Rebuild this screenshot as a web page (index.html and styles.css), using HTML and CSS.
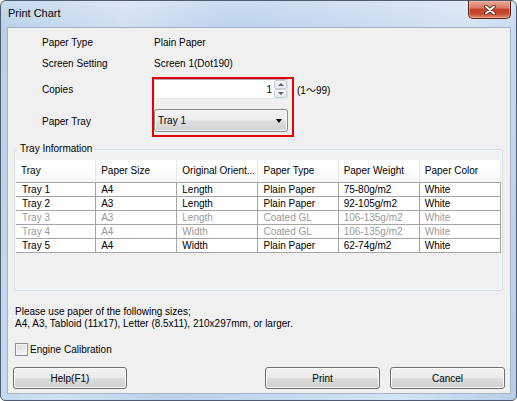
FILE: index.html
```html
<!DOCTYPE html>
<html>
<head>
<meta charset="utf-8">
<link rel="stylesheet" href="styles.css">
</head>
<body>
<div class="window">
  <div class="titlebar">
    <span class="title">Print Chart</span>
    <div class="close">
      <svg width="12" height="10" viewBox="0 0 12 10">
        <path d="M2 1.5 L10 8.5 M10 1.5 L2 8.5" stroke="#4a1d16" stroke-width="3.6" stroke-linecap="round" fill="none"/>
        <path d="M2 1.5 L10 8.5 M10 1.5 L2 8.5" stroke="#ffffff" stroke-width="2" stroke-linecap="round" fill="none"/>
      </svg>
    </div>
  </div>
  <div class="client">
    <div class="form">
      <div class="lbl">Paper Type</div><div class="val">Plain Paper</div><div></div>
      <div class="lbl">Screen Setting</div><div class="val">Screen 1(Dot190)</div><div></div>
      <div class="lbl r3">Copies</div>
      <div class="lbl r4">Paper Tray</div>
      <div class="highlight">
        <div class="spin">
          <span class="spin-val">1</span>
          <div class="spin-btns">
            <div class="spin-btn"><span class="tri-up"></span></div>
            <div class="spin-btn"><span class="tri-down"></span></div>
          </div>
        </div>
        <div class="select"><span>Tray 1</span><span class="arrow"></span></div>
      </div>
      <div class="range">(1〜99)</div>
    </div>

    <fieldset class="group">
      <legend>Tray Information</legend>
      <div class="listview">
        <table>
          <colgroup><col class="c80"><col class="c81"><col class="c81"><col class="c80"><col class="c81"><col class="c81"></colgroup>
          <thead>
            <tr><th>Tray</th><th>Paper Size</th><th>Original Orient...</th><th>Paper Type</th><th>Paper Weight</th><th>Paper Color</th></tr>
          </thead>
          <tbody>
            <tr><td>Tray 1</td><td>A4</td><td>Length</td><td>Plain Paper</td><td>75-80g/m2</td><td>White</td></tr>
            <tr><td>Tray 2</td><td>A3</td><td>Length</td><td>Plain Paper</td><td>92-105g/m2</td><td>White</td></tr>
            <tr class="dis"><td>Tray 3</td><td>A3</td><td>Length</td><td>Coated GL</td><td>106-135g/m2</td><td>White</td></tr>
            <tr class="dis"><td>Tray 4</td><td>A4</td><td>Width</td><td>Coated GL</td><td>106-135g/m2</td><td>White</td></tr>
            <tr><td>Tray 5</td><td>A4</td><td>Width</td><td>Plain Paper</td><td>62-74g/m2</td><td>White</td></tr>
          </tbody>
        </table>
      </div>
    </fieldset>

    <p class="note">Please use paper of the following sizes;<br>A4, A3, Tabloid (11x17), Letter (8.5x11), 210x297mm, or larger.</p>

    <div class="check"><span class="box"></span><span>Engine Calibration</span></div>

    <div class="buttons">
      <div class="btn help">Help(F1)</div>
      <div class="spacer"></div>
      <div class="btn print">Print</div>
      <div class="btn cancel">Cancel</div>
    </div>
  </div>
</div>
</body>
</html>
```

FILE: styles.css
```css
html, body {
  margin: 0;
  padding: 0;
}
body {
  width: 517px;
  height: 401px;
  overflow: hidden;
  background: #ffffff;
  font-family: "Liberation Sans", "Noto Sans CJK JP", sans-serif;
  font-size: 10px;
  color: #000;
}
.window {
  position: relative;
  box-sizing: border-box;
  width: 517px;
  height: 401px;
  border: 1px solid #4e5d70;
  border-radius: 6px 6px 5px 5px;
  background:
    linear-gradient(to bottom, rgba(255,255,255,0.25), rgba(255,255,255,0) 30px),
    linear-gradient(100deg, #b7cfe9 0%, #cfe0f2 22%, #bad1ea 40%, #c6daef 62%, #d3e3f3 80%, #b6cde8 100%);
  padding: 0 5px 6px 6px;
  display: flex;
  flex-direction: column;
}
.titlebar {
  height: 26px;
  display: flex;
  align-items: center;
  padding-bottom: 2px;
  box-sizing: border-box;
}
.title {
  padding-left: 1px;
  font-size: 11px;
}
.close {
  position: absolute;
  top: -1px;
  right: 5px;
  width: 43px;
  height: 19px;
  box-sizing: border-box;
  border: 1px solid #5a2318;
  border-top-color: #4e5d70;
  border-radius: 0 0 5px 5px;
  background: linear-gradient(to bottom, #e9a99a 0%, #d97a64 40%, #c4412a 50%, #c94a30 75%, #e08a6c 100%);
  box-shadow: inset 0 0 0 1px rgba(255, 200, 180, 0.45);
  display: flex;
  align-items: center;
  justify-content: center;
}
.client {
  flex: 1;
  border: 1px solid #a3b2c5;
  background: #f0f0f0;
  display: flex;
  flex-direction: column;
}

/* form */
.form {
  display: grid;
  grid-template-columns: 110px 142px auto;
  grid-template-rows: 21px 21px 31px 32px;
  margin: 4px 0 0 34px;
}
.lbl {
  align-self: center;
}
.val {
  align-self: center;
  padding-left: 2px;
}
.r3 { grid-column: 1; grid-row: 3; }
.r4 { grid-column: 1; grid-row: 4; }
.highlight {
  grid-column: 2;
  grid-row: 3 / 5;
  margin-top: 3px;
  border: 2px solid #e6000a;
  padding: 0 4px 3px 0;
  display: flex;
  flex-direction: column;
  gap: 10px;
}
.range {
  grid-column: 3;
  grid-row: 3;
  align-self: center;
  padding-left: 3px;
}
.spin {
  height: 20px;
  box-sizing: border-box;
  border: 1px solid;
  border-color: #abadb3 #dbdfe6 #e3e9ef #e2e3ea;
  background: #fff;
  display: flex;
  align-items: center;
  justify-content: flex-end;
}
.spin-val {
  padding-right: 2px;
}
.spin-btns {
  width: 13px;
  height: 18px;
  display: flex;
  flex-direction: column;
}
.spin-btn {
  flex: 1;
  box-sizing: border-box;
  border: 1px solid #c9ced6;
  border-radius: 2px;
  background: linear-gradient(to bottom, #f8f8f8, #e6e9ee);
  display: flex;
  align-items: center;
  justify-content: center;
}
.tri-up {
  width: 0;
  height: 0;
  border-left: 3px solid transparent;
  border-right: 3px solid transparent;
  border-bottom: 3px solid #4d6185;
}
.tri-down {
  width: 0;
  height: 0;
  border-left: 3px solid transparent;
  border-right: 3px solid transparent;
  border-top: 3px solid #4d6185;
}
.select {
  height: 23px;
  box-sizing: border-box;
  border: 1px solid #8a8a8a;
  border-radius: 3px;
  background: linear-gradient(to bottom, #f4f4f4 0%, #ececec 48%, #dedede 52%, #d2d2d2 100%);
  box-shadow: inset 0 0 0 1px #f8f8f8;
  display: flex;
  align-items: center;
  justify-content: space-between;
  padding: 0 5px 0 3px;
}
.arrow {
  width: 0;
  height: 0;
  border-left: 3.5px solid transparent;
  border-right: 3.5px solid transparent;
  border-top: 4px solid #000;
}

/* group */
.group {
  margin: 6px 7px 0 6px;
  border: 1px solid #d5dfe5;
  border-radius: 3px;
  box-shadow: inset 0 0 0 1px #fafcfd;
  padding: 5px 1px 1px 1px;
  min-width: 0;
}
.group legend {
  padding: 0 2px;
  margin-left: 2px;
  line-height: 12px;
}
.listview {
  height: 129px;
}
table {
  border-collapse: separate;
  border-spacing: 0;
  table-layout: fixed;
  width: 485px;
}
col.c80 { width: 80px; }
col.c81 { width: 81px; }
th {
  font-weight: normal;
  text-align: left;
  padding: 5px 5px;
  line-height: 12px;
  white-space: nowrap;
  overflow: hidden;
  background: linear-gradient(to bottom, #ffffff 0%, #ffffff 45%, #f5f6f8 100%);
  border-right: 1px solid #e4e7eb;
}
td {
  padding: 0 5px;
  line-height: 13px;
  background: #fff;
  white-space: nowrap;
  overflow: hidden;
  border-right: 1px solid #a5a5a5;
  border-bottom: 1px solid #a5a5a5;
}
td:first-child {
  padding-left: 6px;
}
tbody tr:first-child td {
  border-top: 1px solid #a5a5a5;
}
tr.dis td {
  color: #9a9a9a;
}

/* bottom */
.note {
  margin: 15px 0 0 7px;
  line-height: 12px;
}
.check {
  margin: 13px 0 0 7px;
  height: 13px;
  display: flex;
  align-items: center;
}
.box {
  width: 13px;
  height: 13px;
  box-sizing: border-box;
  border: 1px solid #8f8f8f;
  background: linear-gradient(135deg, #dcdcdc, #f6f6f6);
  box-shadow: inset 0 0 0 1px #f4f4f4;
  margin-right: 2px;
}
.buttons {
  margin-top: 11px;
  padding: 0 5px;
  display: flex;
  gap: 10px;
}
.spacer {
  flex: 1;
}
.btn {
  height: 22px;
  box-sizing: border-box;
  border: 1px solid #707070;
  border-radius: 3px;
  background: linear-gradient(to bottom, #f2f2f2 0%, #ebebeb 48%, #dddddd 52%, #cfcfcf 100%);
  box-shadow: inset 0 0 0 1px #fbfbfb;
  display: flex;
  align-items: center;
  justify-content: center;
}
.help { width: 114px; }
.print { width: 115px; }
.cancel { width: 115px; }
```
